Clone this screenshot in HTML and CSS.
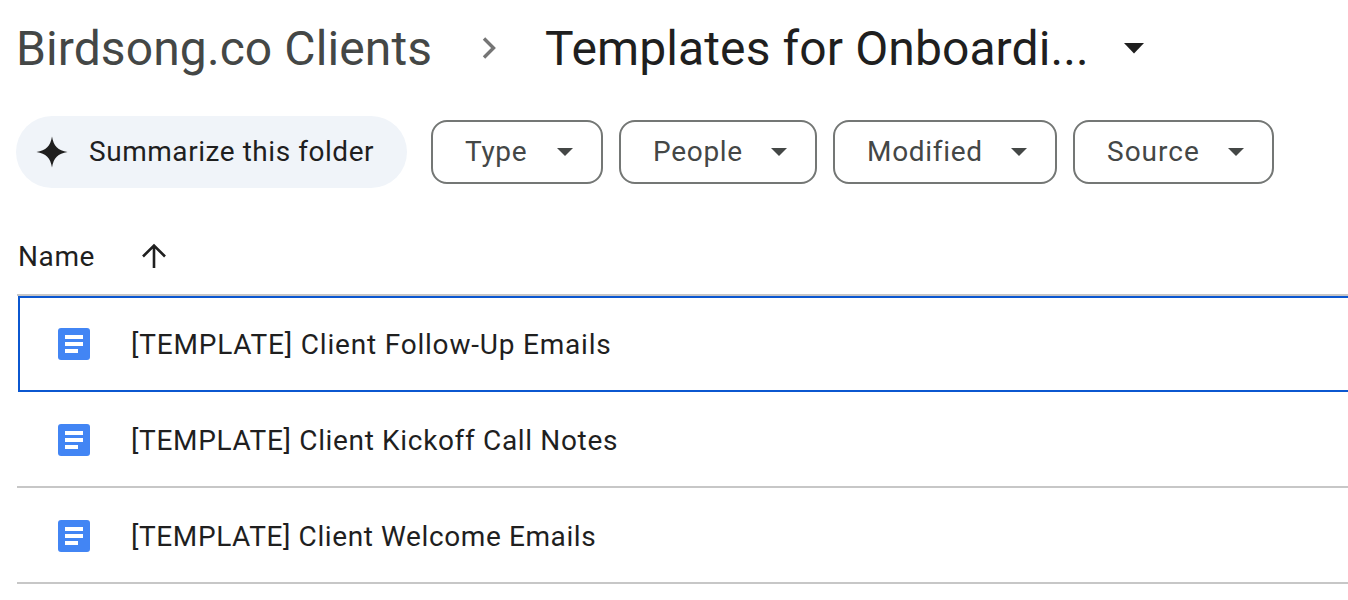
FILE: index.html
```html
<!DOCTYPE html>
<html lang="en">
<head>
<meta charset="utf-8">
<title>Templates for Onboarding</title>
<link rel="stylesheet" href="styles.css">
</head>
<body>
<nav class="crumbs">
  <span class="crumb-parent">Birdsong.co Clients</span>
  <svg class="crumb-sep" width="24" height="32" viewBox="0 0 24 32"><path d="M6 6.5 15.5 16 6 25.500" fill="none" stroke="#757575" stroke-width="3.400"/></svg>
  <span class="crumb-current">Templates for Onboardi...</span>
  <svg class="crumb-caret" width="20" height="11" viewBox="0 0 20 11"><path d="M0 0h20L10 10.500z" fill="#1f1f1f"/></svg>
</nav>
<div class="filters">
  <button class="summarize">
    <svg width="32" height="32" viewBox="0 0 32 32"><path d="M16 0.500C17.500 10 22 14.500 31.500 16 22 17.500 17.500 22 16 31.500 14.500 22 10 17.500 0.500 16 10 14.500 14.500 10 16 0.500z" fill="#1f1f1f"/></svg>
    <span>Summarize this folder</span>
  </button>
  <button class="chip chip-type"><span>Type</span><i class="caret"></i></button>
  <button class="chip chip-people"><span>People</span><i class="caret"></i></button>
  <button class="chip chip-modified"><span>Modified</span><i class="caret"></i></button>
  <button class="chip chip-source"><span>Source</span><i class="caret"></i></button>
</div>
<div class="list-head">
  <span>Name</span>
  <svg width="26" height="26" viewBox="0 0 26 26"><path d="M13 25V2.500M2 13.500 13 2.500 24 13.500" fill="none" stroke="#1f1f1f" stroke-width="2.600"/></svg>
</div>
<ul class="files">
  <li class="file selected"><svg class="doc" width="32" height="32" viewBox="0 0 32 32"><use href="#doc"/></svg><span>[TEMPLATE] Client Follow-Up Emails</span></li>
  <li class="file file-kickoff"><svg class="doc" width="32" height="32" viewBox="0 0 32 32"><use href="#doc"/></svg><span>[TEMPLATE] Client Kickoff Call Notes</span></li>
  <li class="file file-welcome"><svg class="doc" width="32" height="32" viewBox="0 0 32 32"><use href="#doc"/></svg><span>[TEMPLATE] Client Welcome Emails</span></li>
</ul>
<svg class="defs" width="0" height="0"><defs><g id="doc"><rect width="32" height="32" rx="3" fill="#4285f4"/><path d="M7 7h18v4H7zM7 14h18v4H7zM7 21h13v4H7z" fill="#fff"/></g></defs></svg>
</body>
</html>
```
FILE: styles.css
```css
* { box-sizing: border-box; }
html, body { margin: 0; background: #fff; overflow: hidden; }
body { font-family: Roboto, "Noto Sans", sans-serif; color: #1f1f1f; height: 600px; }
.crumbs { display: flex; align-items: center; height: 96px; padding-left: 16px; font-size: 48px; letter-spacing: 0.1px; }
.crumb-parent { color: #444746; }
.crumb-sep { margin-left: 46px; }
.crumb-current { margin-left: 43px; }
.crumb-caret { margin-left: 35px; }
.filters { display: flex; align-items: center; height: 72px; margin-top: 20px; padding-left: 16px; }
button { font: inherit; font-size: 28px; letter-spacing: 0.7px; padding: 0; background: none; cursor: pointer; }
button span { position: relative; top: -1px; }
.summarize { display: flex; align-items: center; width: 391px; height: 72px; padding-left: 20px; gap: 21px; border: 0; border-radius: 36px; background: #f0f4f9; color: #1f1f1f; letter-spacing: 0.55px; }
.chip { display: flex; align-items: center; justify-content: space-between; height: 64px; margin-left: 16px; padding: 0 28px 0 32px; border: 2px solid #747775; border-radius: 16px; color: #444746; }
.summarize + .chip { margin-left: 24px; }
.chip-type { width: 172px; }
.chip-people { width: 198px; }
.chip-modified { width: 224px; }
.chip-source { width: 201px; letter-spacing: 1px; }
.caret { width: 0; height: 0; border-style: solid; border-width: 8px 8px 0; border-color: #444746 transparent transparent; }
.list-head { display: flex; align-items: center; gap: 46px; height: 106px; padding: 30px 0 0 18px; font-size: 28px; letter-spacing: 0.6px; }
.files { list-style: none; margin: 0 0 0 17px; padding: 0; border-top: 2px solid #c7c7c7; }
.file { display: flex; align-items: center; height: 96px; padding: 2px 0 0 41px; gap: 41px; font-size: 28px; letter-spacing: 0.8px; border-bottom: 2px solid #c7c7c7; }
.file.selected { margin-left: 1px; padding: 0 0 0 38px; border: 2px solid #0b57d0; border-right: 0; }
.file-kickoff { letter-spacing: 0.66px; }
.file-welcome { letter-spacing: 0.6px; }
.doc { flex: none; }
.defs { position: absolute; }
```
